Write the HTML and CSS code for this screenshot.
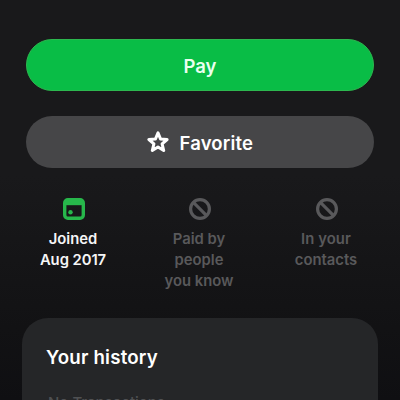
FILE: index.html
```html
<!DOCTYPE html>
<html lang="en">
<head>
<meta charset="utf-8">
<title>Profile</title>
<link rel="stylesheet" href="styles.css">
</head>
<body>
<main class="screen">
  <div class="actions">
    <button class="button pay"><span class="pay-label">Pay</span></button>
    <button class="button favorite">
      <svg class="star" viewBox="0 0 22 22"><path d="M11 1.9l2.5 6 6.6.6-5 4.4 1.6 6.6L11 16l-5.7 3.5 1.6-6.6-5-4.4 6.6-.6z"/></svg>
      <span class="favorite-label">Favorite</span>
    </button>
  </div>
  <div class="facts">
    <div class="fact active">
      <svg class="calendar" viewBox="0 0 22 22"><rect class="frame" x="1.7" y="1.7" width="18.6" height="18.6" rx="3.2"/><path class="header" d="M2 2h18v5.2H2z"/><circle cx="7.5" cy="14.2" r="2.2"/></svg>
      <span>Joined</span>
      <span class="date">Aug 2017</span>
    </div>
    <div class="fact">
      <svg class="none" viewBox="0 0 22 22"><circle cx="11" cy="11" r="9.4"/><path d="M4.4 4.4l13.2 13.2"/></svg>
      <span>Paid by</span>
      <span>people</span>
      <span>you know</span>
    </div>
    <div class="fact">
      <svg class="none" viewBox="0 0 22 22"><circle cx="11" cy="11" r="9.4"/><path d="M4.4 4.4l13.2 13.2"/></svg>
      <span class="in-your">In your</span>
      <span>contacts</span>
    </div>
  </div>
  <section class="history">
    <h2>Your history</h2>
    <p>No Transactions</p>
  </section>
</main>
</body>
</html>
```
FILE: styles.css
```css
* { box-sizing: border-box; }
body { margin: 0; background: #111113; }
.screen {
  height: 400px;
  overflow: hidden;
  padding: 39px 22px 0;
  background: linear-gradient(#19191b 0%, #19191b 44%, #151517 65%, #121214 82%, #0f0f12 100%);
  color: #fff;
  font-family: Inter, "Liberation Sans", sans-serif;
  font-weight: 600;
}
.actions { display: grid; gap: 25.5px; padding: 0 4px; }
.button {
  display: flex;
  align-items: center;
  justify-content: center;
  height: 51.5px;
  padding: 2px 0 0;
  border: 0;
  border-radius: 26px;
  color: #fff;
  font: 600 18.5px/24px Inter, "Liberation Sans", sans-serif;
}
.pay { background: #09bd46; border: 1px solid #2cb84f; }
.pay-label { color: #eaffef; }
.favorite { background: #464648; gap: 10.5px; }
.favorite-label { letter-spacing: 0.15px; }
.star { width: 22px; height: 22px; fill: none; stroke: #fff; stroke-width: 3; stroke-linejoin: round; margin-top: -2px; }
.facts {
  display: grid;
  grid-template-columns: 102px 150px 104px;
  justify-content: space-between;
  height: 150.5px;
  padding-top: 30px;
  color: #59595b;
}
.fact {
  display: flex;
  flex-direction: column;
  align-items: center;
  font-size: 14.8px;
  line-height: 21.3px;
}
.fact svg { width: 22px; height: 22px; margin: 0 0 9.3px 2px; }
.date { letter-spacing: -0.05px; }
.in-your { letter-spacing: 0.1px; }
.active { color: #f5f5f6; }
.calendar { fill: #27b74b; }
.frame { fill: none; stroke: #27b74b; stroke-width: 3.4; }
.none { fill: none; stroke: #59595b; stroke-width: 3.2; }
.history {
  height: 110px;
  padding: 28px 24px;
  border-radius: 26px 26px 0 0;
  background: #252628;
}
h2 { margin: 0; font-size: 18.7px; line-height: 24px; font-weight: 600; letter-spacing: 0.2px; }
p { margin: 20.5px 0 0 2px; font-size: 15px; line-height: 24px; font-weight: 500; color: #4f5052; }
```
